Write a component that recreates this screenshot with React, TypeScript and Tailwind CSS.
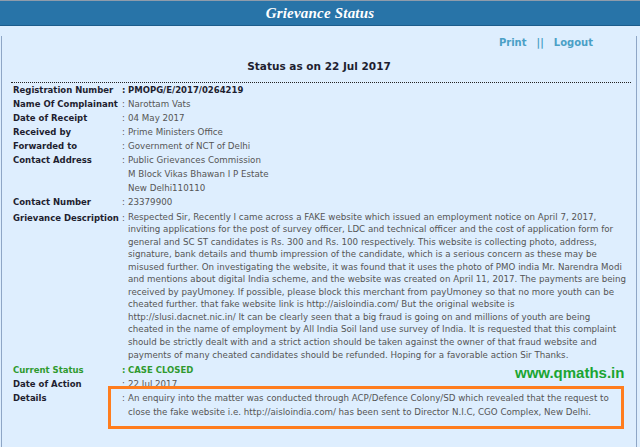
import React from "react";

const desc = [
  "Respected Sir, Recently I came across a FAKE website which issued an employment notice on April 7, 2017,",
  "inviting applications for the post of survey officer, LDC and technical officer and the cost of application form for",
  "general and SC ST candidates is Rs. 300 and Rs. 100 respectively. This website is collecting photo, address,",
  "signature, bank details and thumb impression of the candidate, which is a serious concern as these may be",
  "misused further. On investigating the website, it was found that it uses the photo of PMO india Mr. Narendra Modi",
  "and mentions about digital India scheme, and the website was created on April 11, 2017. The payments are being",
  "received by payUmoney. If possible, please block this merchant from payUmoney so that no more youth can be",
  "cheated further. that fake website link is http://aisloindia.com/ But the original website is",
  "http://slusi.dacnet.nic.in/ It can be clearly seen that a big fraud is going on and millions of youth are being",
  "cheated in the name of employment by All India Soil land use survey of India. It is requested that this complaint",
  "should be strictly dealt with and a strict action should be taken against the owner of that fraud website and",
  "payments of many cheated candidates should be refunded. Hoping for a favorable action Sir Thanks.",
];

const Row: React.FC<{ label: string; value: React.ReactNode; strong?: boolean; green?: boolean; tight?: boolean }> = ({
  label,
  value,
  strong,
  green,
  tight,
}) => (
  <div className={`grid grid-cols-[109px_6px_1fr] ${tight ? "py-[1.5px]" : ""}`}>
    <div className={`font-bold text-[8.5px] leading-[14px] ${green ? "text-[#2f9a2f]" : "text-[#1e1e30]"}`}>{label}</div>
    <div
      className={`leading-[14px] ${green ? "text-[#2f9a2f] font-bold" : strong ? "text-[#1e1e30] font-bold" : "text-[#555]"}`}
    >
      :
    </div>
    <div
      className={`whitespace-nowrap ${tight ? "leading-[12.55px]" : "leading-[14px]"} ${
        green
          ? "text-[#2f9a2f] font-bold text-[8.5px]"
          : strong
            ? "text-[#1e1e30] font-bold text-[8.5px]"
            : "text-[#555] text-[8.7px]"
      }`}
    >
      {value}
    </div>
  </div>
);

const App: React.FC = () => (
  <div className="relative w-[640px] h-[447px] overflow-hidden bg-[#deeefe] font-['DejaVu_Sans',Verdana,sans-serif] text-[8.5px]">
    <div className="h-[26px] bg-[#2874a8] border-t border-[#8f9cab] border-b border-b-[#1c5d8c] flex items-center justify-center">
      <h1 className="text-white font-bold italic text-[15px] font-['Liberation_Serif',serif] tracking-[0.2px]">
        Grievance Status
      </h1>
    </div>

    <div className="ml-px mr-[3px] h-[418px] border-l border-r border-b border-[#8ea6c6]">
      <div className="mt-[10px] flex justify-end pr-[43px] text-[10px] font-bold leading-[14px] text-[#4aa0c6]">
        <span>Print</span>
        <span className="ml-[10px] mr-[10px]">||</span>
        <span>Logout</span>
      </div>

      <div className="mt-[9px] text-center text-[10.5px] font-bold leading-[14px] text-[#1e1e30]">
        Status as on 22 Jul 2017
      </div>

      <div className="mt-[9px] ml-[9px] mr-[5px] border-t border-dotted border-[#222]" />

      <div className="pl-[11px]">
        <Row label="Registration Number" value="PMOPG/E/2017/0264219" strong />
        <Row label="Name Of Complainant" value="Narottam Vats" />
        <Row label="Date of Receipt" value="04 May 2017" />
        <Row label="Received by" value="Prime Ministers Office" />
        <Row label="Forwarded to" value="Government of NCT of Delhi" />
        <Row label="Contact Address" value="Public Grievances Commission" />
        <div className="pl-[115px] leading-[14px] text-[8.7px] text-[#555]">M Block Vikas Bhawan I P Estate</div>
        <div className="pl-[115px] leading-[14px] text-[8.7px] text-[#555]">New Delhi110110</div>
        <Row label="Contact Number" value="23379900" />
        <Row
          label="Grievance Description"
          tight
          value={desc.map((l) => (
            <div key={l}>{l}</div>
          ))}
        />
        <Row label="Current Status" value="CASE CLOSED" green />
        <Row label="Date of Action" value="22 Jul 2017" />
        <Row
          label="Details"
          value={
            <>
              <div>An enquiry into the matter was conducted through ACP/Defence Colony/SD which revealed that the request to</div>
              <div>close the fake website i.e. http://aisloindia.com/ has been sent to Director N.I.C, CGO Complex, New Delhi.</div>
            </>
          }
        />
      </div>
    </div>

    <div className="absolute left-[515px] top-[364px] font-['Liberation_Sans',Arial,sans-serif] text-[15px] font-bold leading-[17px] text-[#1aa532]">
      www.qmaths.in
    </div>
    <div className="absolute left-[108px] top-[386px] w-[516px] h-[43px] border-[3px] border-[#ff7d1e]" />
  </div>
);

export default App;
